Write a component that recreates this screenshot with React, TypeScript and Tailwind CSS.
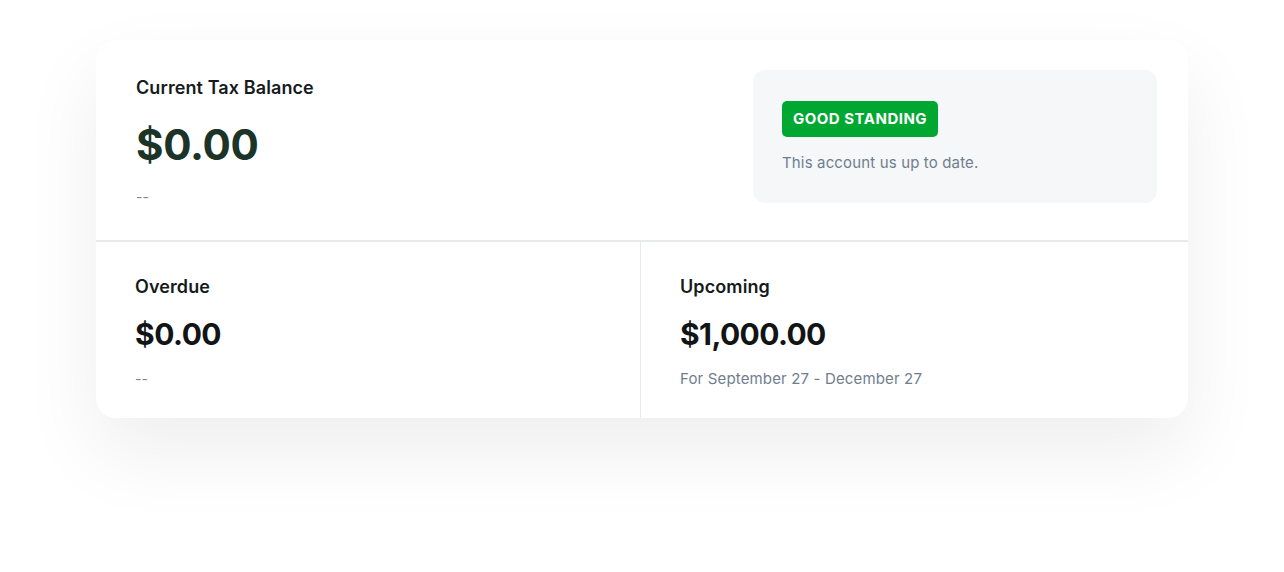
export default function App() {
  return (
    <div
      className="w-[1284px] h-[572px] bg-white pt-[40px] pl-[96px]"
      style={{ fontFamily: 'Inter, "Noto Sans", sans-serif' }}
    >
      <div className="w-[1092px] h-[378px] bg-white rounded-[20px] shadow-[0_34px_80px_rgba(0,0,0,0.07)] flex flex-col overflow-hidden">
        {/* Top: current balance + status */}
        <div className="h-[202px] flex justify-between pl-[40px] pr-[31px] border-b-2 border-[#e8e9eb]">
          <div className="pt-[36px]">
            <h2 className="text-[18px] leading-[24px] font-semibold text-[#161a1d] tracking-[0.1px]">Current Tax Balance</h2>
            <p className="mt-[20px] text-[42px] leading-[50px] font-bold text-[#1c3328] tracking-[-0.3px]">$0.00</p>
            <p className="mt-[18px] text-[14px] leading-[18px] text-[#7c8896]">--</p>
          </div>
          <div className="mt-[30px] w-[404px] h-[133px] bg-[#f5f7f9] rounded-[12px] pl-[29px] pt-[31px]">
            <span className="inline-flex items-center h-[36px] px-[11px] rounded-[5px] bg-[#00a832] text-white text-[15px] font-bold tracking-[0.5px]">
              GOOD STANDING
            </span>
            <p className="mt-[16px] text-[15px] leading-[20px] text-[#6f7e8e] tracking-[0.15px]">This account us up to date.</p>
          </div>
        </div>

        {/* Bottom: overdue / upcoming */}
        <div className="flex-1 grid grid-cols-[545px_1fr]">
          <div className="border-r border-[#e8e9eb] pl-[39px] pt-[33px]">
            <h3 className="text-[18px] leading-[24px] font-semibold text-[#161a1d] tracking-[0.1px]">Overdue</h3>
            <p className="mt-[16px] text-[30px] leading-[38px] font-bold text-[#121416] tracking-[-0.5px]">$0.00</p>
            <p className="mt-[17px] text-[14px] leading-[18px] text-[#7c8896]">--</p>
          </div>
          <div className="pl-[39px] pt-[33px]">
            <h3 className="text-[18px] leading-[24px] font-semibold text-[#161a1d] tracking-[0.1px]">Upcoming</h3>
            <p className="mt-[16px] text-[30px] leading-[38px] font-bold text-[#121416] tracking-[-0.6px]">$1,000.00</p>
            <p className="mt-[17px] text-[15px] leading-[18px] text-[#6f7e8e] tracking-[0.15px]">For September 27 - December 27</p>
          </div>
        </div>
      </div>
    </div>
  );
}
